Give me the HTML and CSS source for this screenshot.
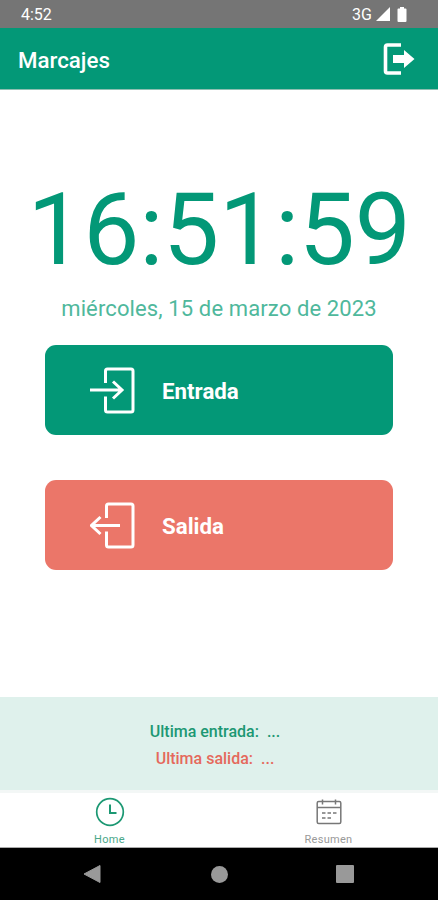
FILE: index.html
```html
<!DOCTYPE html>
<html lang="es">
<head>
    <meta charset="UTF-8">
    <meta name="viewport" content="width=device-width, initial-scale=1.0">
    <title>Marcajes</title>
    <link rel="stylesheet" href="styles.css">
</head>
<body>
    <div class="status-bar">
        <span>4:52</span>
        <div class="status-icons">
            <span class="network">3G</span>
            <svg width="14" height="14" viewBox="0 0 14 14"><path d="M14 0v14H0z" fill="#fff"/></svg>
            <svg class="battery" width="10" height="15" viewBox="0 0 10 15"><path d="M3 0h4v1.500h1.500q1 0 1 1V14q0 1-1 1h-7q-1 0-1-1V2.500q0-1 1-1H3z" fill="#fff"/></svg>
        </div>
    </div>

    <header class="header">
        <h1>Marcajes</h1>
        <svg class="logout" width="32" height="32" viewBox="0 0 32 32">
            <path d="M18 2H4.500Q2.500 2 2.500 4v24q0 2 2 2H18" fill="none" stroke="#fff" stroke-width="3.600"/>
            <path d="M10 12H21V7l10.500 9L21 25v-5H10z" fill="#fff"/>
        </svg>
    </header>

    <main class="content">
        <div class="clock">16:51:59</div>
        <div class="date">miércoles, 15 de marzo de 2023</div>

        <button class="btn btn-in">
            <svg width="46" height="47" viewBox="0 0 46 47" fill="none" stroke="#fff" stroke-width="3">
                <path d="M15.500 16V4q0-2 2-2H41q2 0 2 2v39q0 2-2 2H17.500q-2 0-2-2V29.500"/>
                <path d="M0 23h32M23 14.500l9 8.500-9 8.500"/>
            </svg>
            <span>Entrada</span>
        </button>

        <button class="btn btn-out">
            <svg width="46" height="47" viewBox="0 0 46 47" fill="none" stroke="#fff" stroke-width="3">
                <path d="M16.500 16V4q0-2 2-2H41q2 0 2 2v39q0 2-2 2H18.500q-2 0-2-2V29.500"/>
                <path d="M30 23.500H1.500M10.500 15l-9 8.500 9 8.500"/>
            </svg>
            <span>Salida</span>
        </button>
    </main>

    <section class="last">
        <p class="last-in">Ultima entrada: <span>...</span></p>
        <p class="last-out">Ultima salida: <span>...</span></p>
    </section>

    <nav class="tabs">
        <a class="tab active">
            <svg width="30" height="30" viewBox="0 0 30 30" fill="none" stroke="currentColor">
                <circle cx="15" cy="15" r="13.300" stroke-width="1.700"/>
                <path d="M15 7.500V16h6.500" stroke-width="2"/>
            </svg>
            <span>Home</span>
        </a>
        <a class="tab">
            <svg width="30" height="30" viewBox="0 0 30 30" fill="none" stroke="currentColor" stroke-width="1.500">
                <rect x="3.200" y="4.500" width="23.600" height="22" rx="1.500"/>
                <path d="M3.200 10.500h23.600M8.500 2.500v5M21.500 2.500v5"/>
                <path d="M8 16h3.500M13.500 16H17M19 16h3.500M8 21h3.500M13.500 21H17"/>
            </svg>
            <span>Resumen</span>
        </a>
    </nav>

    <div class="android-nav">
        <svg width="18" height="20" viewBox="0 0 18 20"><path d="M17 1.500v17L1 10z" fill="#999" stroke="#999" stroke-linejoin="round"/></svg>
        <div class="nav-home"></div>
        <div class="nav-recent"></div>
    </div>
</body>
</html>
```

FILE: styles.css
```css
* {
    box-sizing: border-box;
}

body {
    font-family: Roboto, sans-serif;
    background-color: #fff;
    margin: 0;
    height: 900px;
    display: flex;
    flex-direction: column;
    overflow: hidden;
}

.status-bar {
    height: 28px;
    padding: 0 31px 0 21px;
    display: flex;
    justify-content: space-between;
    align-items: center;
    background-color: #757575;
    color: #fff;
    font-size: 16px;
}

.status-icons {
    display: flex;
    align-items: center;
}

.network {
    margin-right: 4px;
}

.battery {
    margin-left: 7px;
}

.header {
    height: 62px;
    padding: 0 23px 0 18px;
    display: flex;
    justify-content: space-between;
    align-items: center;
    background-color: #039877;
    border-bottom: 1px solid #8fbfb2;
    color: #fff;
}

.header h1 {
    margin: 2px 0 0;
    font-size: 22.3px;
    font-weight: 500;
}

.content {
    flex: 1;
    display: flex;
    flex-direction: column;
    align-items: center;
}

.clock {
    margin-top: 81px;
    color: #039877;
    font-size: 100px;
    line-height: 118px;
    letter-spacing: -0.3px;
    white-space: nowrap;
}

.date {
    margin-top: 6px;
    color: #4fb89c;
    font-size: 22px;
    line-height: 28px;
    letter-spacing: 0.12px;
    white-space: nowrap;
}

.btn {
    width: 348px;
    height: 90px;
    padding: 0 0 0 45px;
    display: flex;
    align-items: center;
    gap: 26px;
    border: none;
    border-radius: 11px;
    color: #fff;
    font-family: inherit;
    font-size: 22.3px;
    font-weight: 700;
}

.btn span {
    margin-top: 2px;
}

.btn-in {
    margin-top: 22px;
    background-color: #039877;
}

.btn-out {
    margin-top: 45px;
    background-color: #eb7669;
}

.last {
    height: 93px;
    padding: 21px 8px 0 0;
    background-color: #dff1ec;
    text-align: center;
    font-size: 16px;
    font-weight: 500;
}

.last p {
    margin: 0;
    line-height: 27px;
}

.last span {
    margin-left: 4px;
}

.last-in {
    color: #1c9873;
}

.last-out {
    color: #e5695c;
}

.tabs {
    height: 58px;
    display: flex;
    border-top: 3px solid #f3f7f6;
    border-bottom: 1px solid #aaa;
}

.tab {
    flex: 1;
    padding-top: 4px;
    display: flex;
    flex-direction: column;
    align-items: center;
    color: #777;
    font-size: 11px;
}

.tab span {
    margin-top: 6px;
    line-height: 13px;
    letter-spacing: 0.3px;
    color: #999;
}

.tab.active {
    color: #1c9873;
}

.tab.active span {
    color: #4aa88a;
}

.android-nav {
    height: 52px;
    padding: 0 84px 0 83px;
    display: flex;
    justify-content: space-between;
    align-items: center;
    background-color: #000;
}

.nav-home {
    width: 17px;
    height: 17px;
    margin-left: 1px;
    border-radius: 50%;
    background-color: #999;
}

.nav-recent {
    width: 18px;
    height: 18px;
    border-radius: 1px;
    background-color: #999;
}
```
